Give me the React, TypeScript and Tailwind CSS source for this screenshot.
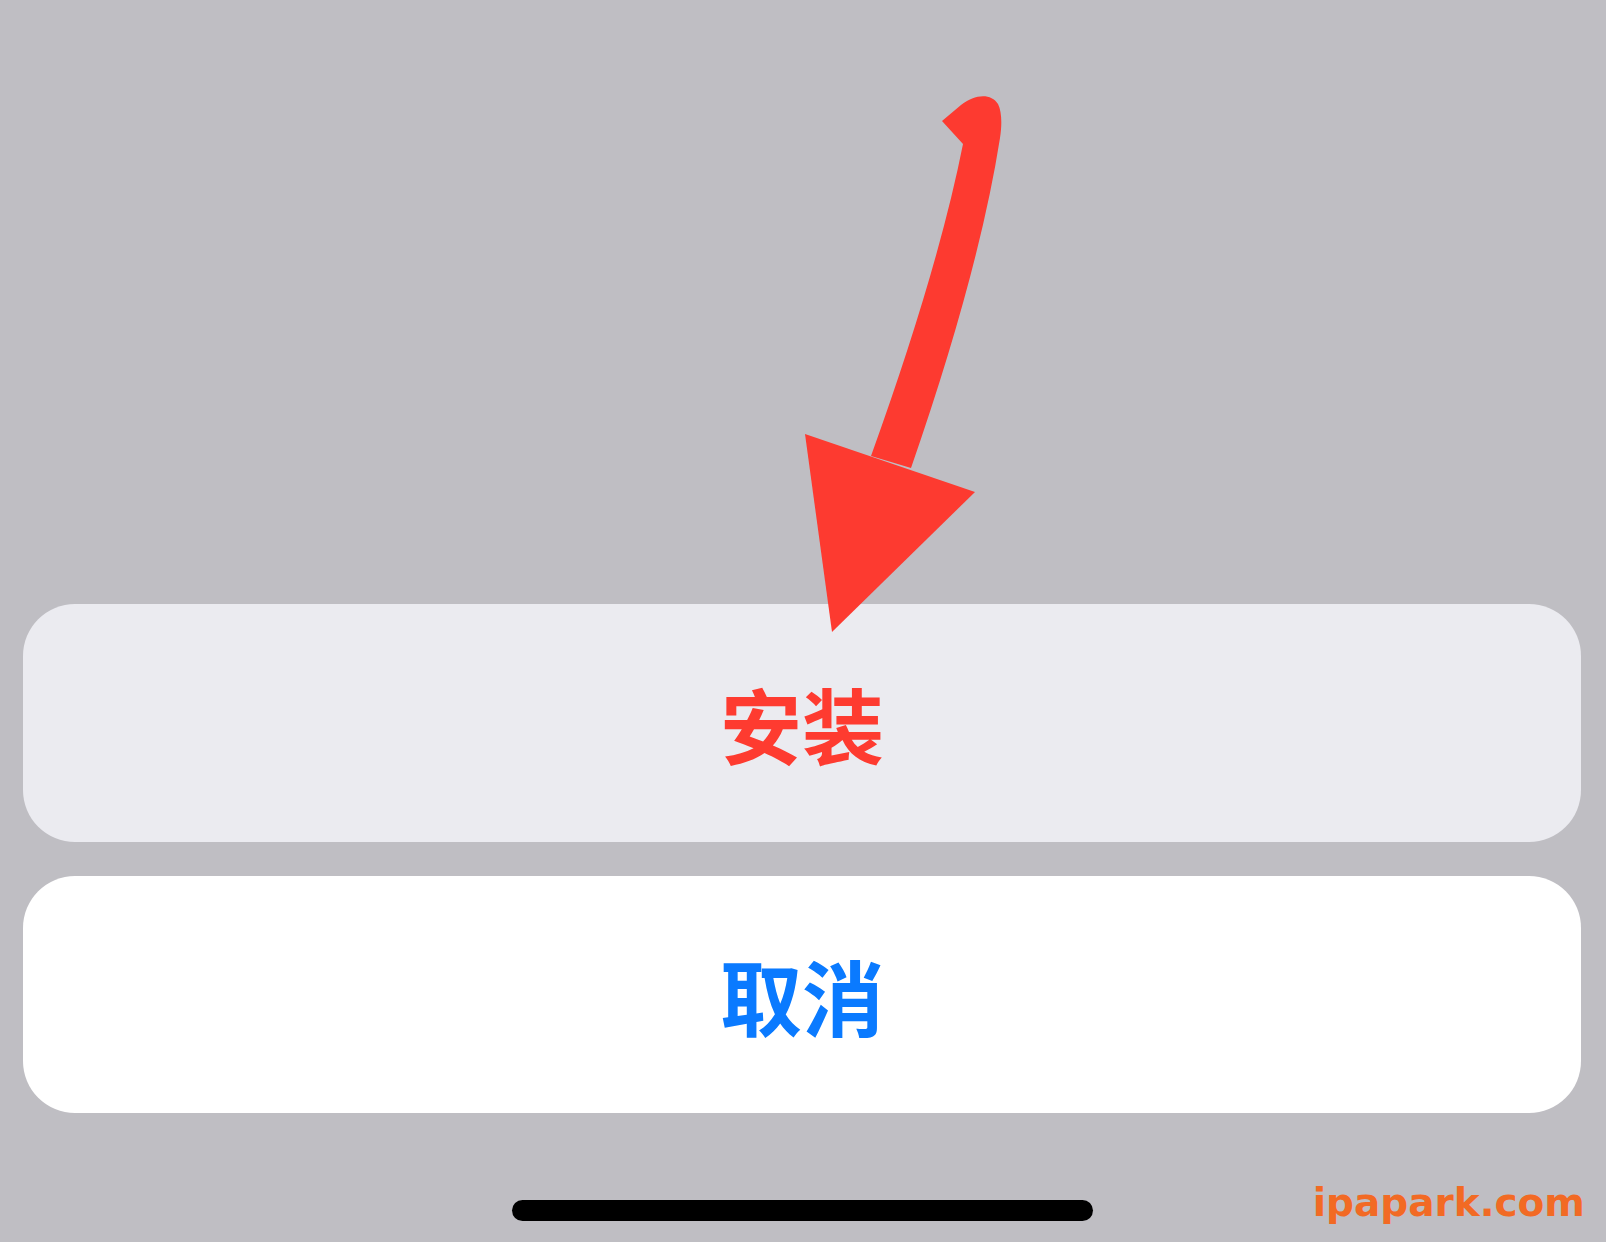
import React from 'react';

function Arrow() {
  return (
    <svg
      className="absolute inset-0 pointer-events-none"
      width={1606}
      height={1242}
      viewBox="0 0 1606 1242"
    >
      <path
        d="M942 121 L961 105 C975 94 991 93 998 104 C1002 112 1002 125 1000 138 Q979 272 911 468 L871 456 Q938 270 963 144 Z"
        fill="#fd3a30"
      />
      <polygon points="805,434 975,492 832,632" fill="#fd3a30" />
    </svg>
  );
}

const cjk = { fontFamily: '"Noto Sans CJK SC", "Noto Sans CJK JP", sans-serif' };

export default function App() {
  return (
    <div className="relative w-[1606px] h-[1242px] overflow-hidden bg-[#bfbec3] flex flex-col">
      <div className="h-[604px] shrink-0" />

      <div className="px-[23px] pr-[25px] flex flex-col gap-[34px]">
        <button className="h-[238px] w-full rounded-[52px] bg-[#ebebf0] flex items-center justify-center">
          <span className="text-[82px] font-bold leading-none text-[#fe3b30]" style={cjk}>
            安装
          </span>
        </button>
        <button className="h-[237px] w-full rounded-[52px] bg-white flex items-center justify-center">
          <span className="text-[82px] font-bold leading-none text-[#0a7aff]" style={cjk}>
            取消
          </span>
        </button>
      </div>

      <div className="mt-[87px] flex justify-center pr-[2px]">
        <div className="w-[581px] h-[21px] rounded-full bg-black" />
      </div>

      <Arrow />

      <span
        className="absolute right-[21px] bottom-[20px] text-[39px] font-bold leading-none text-[#f26a24]"
        style={{ fontFamily: '"DejaVu Sans", sans-serif' }}
      >
        ipapark.com
      </span>
    </div>
  );
}
